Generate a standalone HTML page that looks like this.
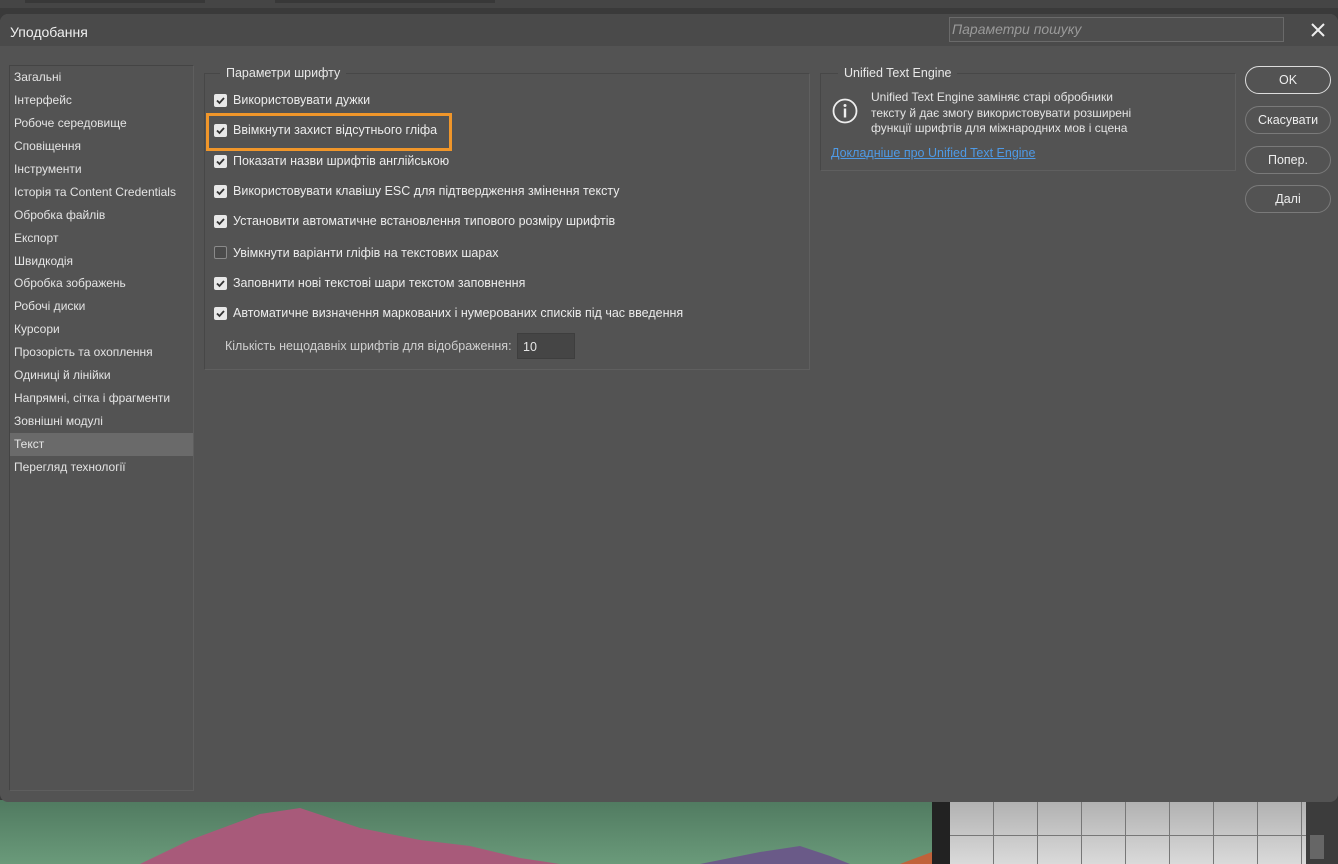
<!DOCTYPE html>
<html><head><meta charset="utf-8"><style>
*{margin:0;padding:0;box-sizing:border-box}
body{width:1338px;height:864px;overflow:hidden;background:#3a3a3a;font-family:"Liberation Sans",sans-serif;font-size:12px;color:#e6e6e6;position:relative}
.abs{position:absolute}
.dlg{left:0;top:14px;width:1338px;height:788px;background:#535353;border-radius:8px;overflow:hidden}
.title{left:0;top:0;width:1338px;height:32px;background:#4a4a4a}
.title span{position:absolute;left:10px;top:10px;font-size:14px;color:#f0f0f0}
.search{left:949px;top:3px;width:335px;height:25px;border:1px solid #6a6a6a;background:#4e4e4e;color:#9a9a9a;font-style:italic;font-size:14px;padding:3px 2px}
.list{left:9px;top:51px;width:185px;height:726px;border:1px solid #444;border-right-color:#5e5e5e;border-bottom-color:#5e5e5e}
.list div{height:22.95px;line-height:23px;padding-left:4px;color:#e4e4e4}
.list .sel{background:#6a6a6a}
.grp{border:1px solid #474747;border-right-color:#5f5f5f;border-bottom-color:#5f5f5f}
.leg{background:#535353;padding:0 6px;color:#e8e8e8;font-size:12.5px}
.cb{left:214px;width:13px;height:13px;background:#e8e8e8;border-radius:2px}
.cb svg{position:absolute;left:1px;top:1px}
.cbe{background:#4b4b4b;border:1px solid #8a8a8a}
.lbl{left:233px;color:#ececec;font-size:12.5px}
.btn{left:1245px;width:86px;height:28px;border:1px solid #7a7a7a;border-radius:14px;text-align:center;line-height:26px;color:#eee;font-size:12.5px}
</style></head><body>
<div class="abs" style="left:0;top:0;width:1338px;height:8px;background:#454545"></div>
<div class="abs" style="left:25px;top:0;width:180px;height:3px;background:#383838"></div>
<div class="abs" style="left:275px;top:0;width:220px;height:3px;background:#383838"></div>
<div class="abs" style="left:0;top:800px;width:932px;height:64px;background:linear-gradient(#507a60,#6a9a7a)"></div>
<svg class="abs" style="left:0;top:800px" width="932" height="64"><path d="M140 64 L190 40 L260 14 L300 8 L360 28 L420 40 L470 46 L520 58 L560 64Z" fill="#a85a7a"/><path d="M700 64 L760 52 L800 46 L830 56 L850 64Z" fill="#6a5a88"/><path d="M900 64 L932 52 L932 64Z" fill="#c0623a"/></svg>
<div class="abs" style="left:932px;top:800px;width:18px;height:64px;background:#222"></div>
<div class="abs" style="left:950px;top:800px;width:356px;height:64px;background-image:repeating-linear-gradient(90deg,transparent 0 43px,#777 43px 44px),linear-gradient(#b0b0b0,#dadada)"></div>
<div class="abs" style="left:950px;top:835px;width:356px;height:1px;background:#777"></div>
<div class="abs" style="left:1306px;top:800px;width:32px;height:64px;background:#3c3c3c"></div>
<div class="abs" style="left:1310px;top:835px;width:14px;height:24px;background:#666"></div>

<div class="abs dlg">
 <div class="abs title"><span>Уподобання</span></div>
 <div class="abs search">Параметри пошуку</div>
 <svg class="abs" style="left:1310px;top:8px" width="16" height="16"><path d="M2 2L14 14M14 2L2 14" stroke="#eee" stroke-width="2"/></svg>
 <div class="abs list">
  <div style="margin-top:0">Загальні</div><div>Інтерфейс</div><div>Робоче середовище</div><div>Сповіщення</div><div>Інструменти</div><div>Історія та Content Credentials</div><div>Обробка файлів</div><div>Експорт</div><div>Швидкодія</div><div>Обробка зображень</div><div>Робочі диски</div><div>Курсори</div><div>Прозорість та охоплення</div><div>Одиниці й лінійки</div><div>Напрямні, сітка і фрагменти</div><div>Зовнішні модулі</div><div class="sel">Текст</div><div>Перегляд технології</div>
 </div>
 <div class="abs grp" style="left:204px;top:59px;width:606px;height:297px"></div>
 <div class="abs leg" style="left:220px;top:52px">Параметри шрифту</div>
 <div class="abs grp" style="left:820px;top:59px;width:416px;height:98px"></div>
 <div class="abs leg" style="left:838px;top:52px">Unified Text Engine</div>
</div>
<div class="abs cb" style="top:94px"><svg width="11" height="11"><path d="M2 5.5L4.5 8L9 3" stroke="#333" stroke-width="1.8" fill="none"/></svg></div>
<div class="abs lbl" style="top:93px">Використовувати дужки</div>
<div class="abs cb" style="top:124px"><svg width="11" height="11"><path d="M2 5.5L4.5 8L9 3" stroke="#333" stroke-width="1.8" fill="none"/></svg></div>
<div class="abs lbl" style="top:123px">Ввімкнути захист відсутнього гліфа</div>
<div class="abs" style="left:206px;top:113px;width:246px;height:38px;border:3px solid #f0962a"></div>
<div class="abs cb" style="top:155px"><svg width="11" height="11"><path d="M2 5.5L4.5 8L9 3" stroke="#333" stroke-width="1.8" fill="none"/></svg></div>
<div class="abs lbl" style="top:154px">Показати назви шрифтів англійською</div>
<div class="abs cb" style="top:185px"><svg width="11" height="11"><path d="M2 5.5L4.5 8L9 3" stroke="#333" stroke-width="1.8" fill="none"/></svg></div>
<div class="abs lbl" style="top:184px">Використовувати клавішу ESC для підтвердження змінення тексту</div>
<div class="abs cb" style="top:215px"><svg width="11" height="11"><path d="M2 5.5L4.5 8L9 3" stroke="#333" stroke-width="1.8" fill="none"/></svg></div>
<div class="abs lbl" style="top:214px">Установити автоматичне встановлення типового розміру шрифтів</div>
<div class="abs cb cbe" style="top:246px"></div>
<div class="abs lbl" style="top:246px">Увімкнути варіанти гліфів на текстових шарах</div>
<div class="abs cb" style="top:277px"><svg width="11" height="11"><path d="M2 5.5L4.5 8L9 3" stroke="#333" stroke-width="1.8" fill="none"/></svg></div>
<div class="abs lbl" style="top:276px">Заповнити нові текстові шари текстом заповнення</div>
<div class="abs cb" style="top:307px"><svg width="11" height="11"><path d="M2 5.5L4.5 8L9 3" stroke="#333" stroke-width="1.8" fill="none"/></svg></div>
<div class="abs lbl" style="top:306px">Автоматичне визначення маркованих і нумерованих списків під час введення</div>
<div class="abs lbl" style="left:225px;top:339px;color:#cfcfcf">Кількість нещодавніх шрифтів для відображення:</div>
<div class="abs" style="left:517px;top:333px;width:58px;height:26px;background:#454545;border:1px solid #3e3e3e;padding:6px 5px;font-size:12.5px">10</div>
<svg class="abs" style="left:832px;top:98px" width="26" height="26"><circle cx="13" cy="13" r="11.5" stroke="#eee" stroke-width="1.8" fill="none"/><circle cx="13" cy="7.5" r="1.5" fill="#eee"/><rect x="11.8" y="10.5" width="2.4" height="9" fill="#eee"/></svg>
<div class="abs" style="left:871px;top:90px;line-height:15.5px;color:#e4e4e4;font-size:12px">Unified Text Engine заміняє старі обробники<br>тексту й дає змогу використовувати розширені<br>функції шрифтів для міжнародних мов і сцена</div>
<div class="abs" style="left:831px;top:146px;color:#4e9ae6;text-decoration:underline;font-size:12.5px">Докладніше про Unified Text Engine</div>
<div class="abs btn" style="top:66px;border-color:#ddd;border-width:1.5px">OK</div>
<div class="abs btn" style="top:106px">Скасувати</div>
<div class="abs btn" style="top:146px">Попер.</div>
<div class="abs btn" style="top:185px">Далі</div>
</body></html>
